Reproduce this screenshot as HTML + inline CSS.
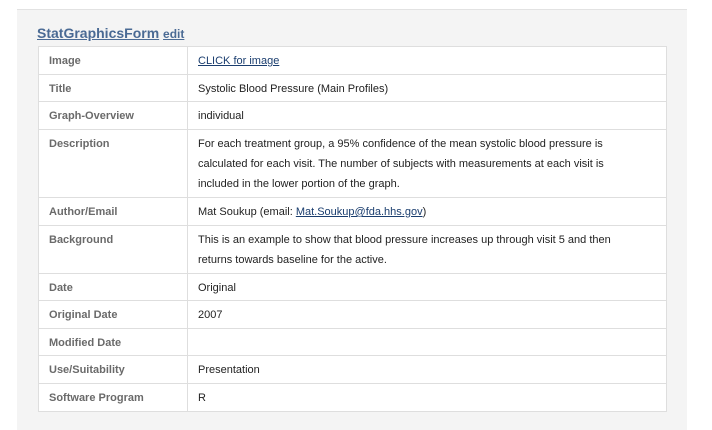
<!DOCTYPE html>
<html><head><style>
body{margin:0;background:#fff;font-family:"Liberation Sans",sans-serif;width:712px;height:410px;overflow:hidden}
.panel{position:absolute;left:17px;top:9px;width:670px;height:420px;background:#f4f4f4;border-top:1px solid #e2e2e2}
h2{position:absolute;left:20px;top:15px;margin:0;font-size:14px;font-weight:bold;color:#4a6a94}
h2 a{color:#4a6a94;text-decoration:underline}
h2 .e{font-size:12px}
table{position:absolute;left:21px;top:36px;width:629px;border-collapse:collapse;background:#fff;font-size:11px}
td{border:1px solid #dedede;padding:7px 50px 5px 10px;vertical-align:top;line-height:14px;color:#222}
td.l{width:128px;font-weight:bold;color:#6a6a6a;padding-right:10px}
td.m{line-height:20px;padding-top:4px;padding-bottom:3px}
a.k{color:#1a3d6e}
</style></head><body>
<div class="panel">
<h2><a>StatGraphicsForm</a> <a class="e">edit</a></h2>
<table>
<tr style="height:28px"><td class="l">Image</td><td><a class="k" style="text-decoration:underline">CLICK for image</a></td></tr>
<tr style="height:27px"><td class="l">Title</td><td>Systolic Blood Pressure (Main Profiles)</td></tr>
<tr style="height:28px"><td class="l">Graph-Overview</td><td>individual</td></tr>
<tr style="height:68px"><td class="l">Description</td><td class="m">For each treatment group, a 95% confidence of the mean systolic blood pressure is calculated for each visit. The number of subjects with measurements at each visit is included in the lower portion of the graph.</td></tr>
<tr style="height:28px"><td class="l">Author/Email</td><td>Mat Soukup (email: <a class="k" style="text-decoration:underline">Mat.Soukup@fda.hhs.gov</a>)</td></tr>
<tr style="height:48px"><td class="l">Background</td><td class="m">This is an example to show that blood pressure increases up through visit 5 and then returns towards baseline for the active.</td></tr>
<tr style="height:27px"><td class="l">Date</td><td>Original</td></tr>
<tr style="height:28px"><td class="l">Original Date</td><td>2007</td></tr>
<tr style="height:27px"><td class="l">Modified Date</td><td></td></tr>
<tr style="height:28px"><td class="l">Use/Suitability</td><td>Presentation</td></tr>
<tr style="height:28px"><td class="l">Software Program</td><td>R</td></tr>
</table>
</div>
</body></html>
